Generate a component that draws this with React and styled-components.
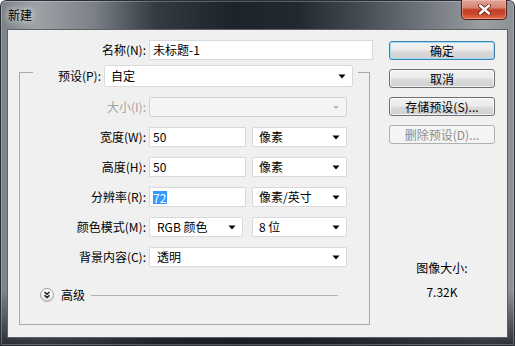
import styled, { createGlobalStyle } from 'styled-components'

const GlobalStyle = createGlobalStyle`
  html, body { margin: 0; padding: 0; }
  body {
    width: 515px;
    height: 346px;
    overflow: hidden;
    font-family: "Noto Sans CJK SC", "Noto Sans", sans-serif;
    font-size: 12px;
    color: #000;
  }
`

export default function App() {
  return (
    <>
      <GlobalStyle />
      <Window>
        <TitleBar>
          <Title>新建</Title>
          <CloseButton>
            <svg width="13" height="11" viewBox="0 0 13 11">
              <path d="M2 1.5 L11 9.5 M11 1.5 L2 9.5" stroke="#5a1a10" strokeWidth="4" strokeLinecap="round" />
              <path d="M2 1.5 L11 9.5 M11 1.5 L2 9.5" stroke="#fff" strokeWidth="2.4" strokeLinecap="round" />
            </svg>
          </CloseButton>
        </TitleBar>

        <Body>
          <LeftColumn>
            <Row>
              <Label $w={138}>名称(N):</Label>
              <TextBox $w={224}>未标题-1</TextBox>
            </Row>

            <GroupBox>
              <PresetRow>
                <PresetLabel>预设(P):</PresetLabel>
                <Select $w={249} $h={22} value="自定" />
              </PresetRow>

              <FieldRow>
                <Label $w={126} $disabled>大小(I):</Label>
                <Select $w={198} disabled />
              </FieldRow>
              <FieldRow>
                <Label $w={126}>宽度(W):</Label>
                <TextBox $w={97}>50</TextBox>
                <Select $w={95} $gap={6} value="像素" />
              </FieldRow>
              <FieldRow>
                <Label $w={126}>高度(H):</Label>
                <TextBox $w={97}>50</TextBox>
                <Select $w={95} $gap={6} value="像素" />
              </FieldRow>
              <FieldRow>
                <Label $w={126}>分辨率(R):</Label>
                <TextBox $w={97}><Selected>72</Selected></TextBox>
                <Select $w={95} $gap={6} value="像素/英寸" />
              </FieldRow>
              <FieldRow>
                <Label $w={126}>颜色模式(M):</Label>
                <Select $w={94} value="RGB 颜色" $pad={7} />
                <Select $w={95} $gap={9} value="8 位" />
              </FieldRow>
              <FieldRow>
                <Label $w={126}>背景内容(C):</Label>
                <Select $w={198} value="透明" $pad={7} />
              </FieldRow>

              <AdvancedRow>
                <ChevronButton>
                  <svg width="12" height="12" viewBox="0 0 12 12">
                    <path d="M3.5 3 L6 5.2 L8.5 3 M3.5 6.3 L6 8.5 L8.5 6.3" fill="none" stroke="#1a1a1a" strokeWidth="1.4" />
                  </svg>
                </ChevronButton>
                <AdvancedText>高级</AdvancedText>
                <Rule />
              </AdvancedRow>
            </GroupBox>
          </LeftColumn>

          <RightColumn>
            <Button $default>确定</Button>
            <Button>取消</Button>
            <Button>存储预设(S)...</Button>
            <Button disabled>删除预设(D)...</Button>
            <ImageSize>
              <SizeLine>图像大小:</SizeLine>
              <SizeLine>7.32K</SizeLine>
            </ImageSize>
          </RightColumn>
        </Body>
      </Window>
    </>
  )
}

function Select({ value, disabled, $w, $h, $gap, $pad }) {
  return (
    <SelectBox $w={$w} $h={$h} $gap={$gap} $pad={$pad} $disabled={disabled}>
      <span>{value}</span>
      <svg width="8" height="5" viewBox="0 0 8 5">
        {disabled
          ? <path d="M1 1 L4 4 L7 1 Z" fill="#b4b4b4" />
          : <path d="M0.5 0.5 L7.5 0.5 L4 4.5 Z" fill="#000" />}
      </svg>
    </SelectBox>
  )
}

const Window = styled.div`
  width: 515px;
  height: 346px;
  box-sizing: border-box;
  display: flex;
  flex-direction: column;
  border-radius: 6px 6px 0 0;
  overflow: hidden;
  box-shadow: inset 0 0 0 1px #2b3036, inset 0 0 0 2px rgba(255,255,255,0.25);
  background:
    linear-gradient(180deg, rgba(0,0,0,0) 0, rgba(0,0,0,0) 290px, rgba(25,30,36,0.85) 346px),
    linear-gradient(90deg, #7a8087 0%, #9da2a7 7%, #7c8288 18%, #343b43 30%, #1d232b 45%, #232931 58%, #444b53 70%, #767c82 84%, #9a9fa4 94%, #8b9096 100%);
`

const TitleBar = styled.div`
  height: 29px;
  flex-shrink: 0;
  display: flex;
  justify-content: space-between;
  align-items: flex-start;
`

const Title = styled.div`
  padding: 7px 0 0 8px;
  font-size: 12px;
  line-height: 16px;
  color: #000;
  text-shadow: 0 0 6px rgba(255,255,255,0.9), 0 0 10px rgba(255,255,255,0.6);
`

const CloseButton = styled.div`
  width: 46px;
  height: 20px;
  box-sizing: border-box;
  margin-right: 8px;
  border: 1px solid #4e1d14;
  border-top: none;
  border-radius: 0 0 5px 5px;
  display: flex;
  align-items: center;
  justify-content: center;
  box-shadow: inset 0 0 0 1px rgba(255,200,190,0.45);
  background: linear-gradient(180deg, #e0a596 0%, #d68471 40%, #c24026 52%, #c9472c 72%, #e46c4a 100%);
`

const Body = styled.div`
  flex: 1;
  margin: 0 7px 8px 7px;
  background: #f0f0f0;
  border: 1px solid #5b6269;
  display: flex;
`

const LeftColumn = styled.div`
  width: 374px;
  flex-shrink: 0;
  display: flex;
  flex-direction: column;
  padding-top: 10px;
`

const Row = styled.div`
  display: flex;
  align-items: center;
  height: 20px;
`

const FieldRow = styled(Row)`
  margin-top: 10px;
`

const Label = styled.div`
  width: ${p => p.$w}px;
  margin-right: 3px;
  text-align: right;
  line-height: 16px;
  white-space: nowrap;
  color: ${p => (p.$disabled ? '#a3a3a3' : '#000')};
`

const TextBox = styled.div`
  width: ${p => p.$w}px;
  height: 20px;
  box-sizing: border-box;
  border: 1px solid #d9d9d9;
  background: #fff;
  padding-left: 3px;
  display: flex;
  align-items: center;
  line-height: 16px;
  white-space: nowrap;
`

const Selected = styled.span`
  background: #3399ff;
  color: #fff;
  line-height: 13px;
  padding: 0 1px 0 0;
`

const SelectBox = styled.div`
  width: ${p => p.$w}px;
  height: ${p => p.$h || 20}px;
  margin-left: ${p => p.$gap || 0}px;
  box-sizing: border-box;
  border: 1px solid ${p => (p.$disabled ? '#d4d4d4' : '#d9d9d9')};
  border-radius: 2px;
  background: ${p => (p.$disabled ? '#f4f4f4' : '#fff')};
  padding: 0 6px 0 ${p => p.$pad || 6}px;
  display: flex;
  align-items: center;
  justify-content: space-between;
  line-height: 16px;
  white-space: nowrap;
`

const GroupBox = styled.div`
  margin: 12px 0 0 11px;
  width: 351px;
  box-sizing: border-box;
  border: 1px solid #a9a9a9;
  padding-bottom: 21px;
  display: flex;
  flex-direction: column;
`

const PresetRow = styled.div`
  margin: -8px 0 0 13px;
  width: 325px;
  height: 22px;
  display: flex;
  align-items: center;
  background: #f0f0f0;
`

const PresetLabel = styled.div`
  width: 71px;
  box-sizing: border-box;
  padding-right: 3px;
  text-align: right;
  line-height: 16px;
  white-space: nowrap;
`

const AdvancedRow = styled.div`
  margin-top: 20px;
  height: 16px;
  padding-left: 20px;
  margin-right: 31px;
  display: flex;
  align-items: center;
`

const ChevronButton = styled.div`
  width: 14px;
  height: 14px;
  box-sizing: border-box;
  border: 1px solid #a2a2a2;
  border-radius: 50%;
  background: linear-gradient(180deg, #ffffff 0%, #f2f2f2 50%, #d9d9d9 100%);
  display: flex;
  align-items: center;
  justify-content: center;
`

const AdvancedText = styled.div`
  margin-left: 7px;
  line-height: 16px;
`

const Rule = styled.div`
  flex: 1;
  height: 1px;
  margin-left: 6px;
  background: #b0b0b0;
`

const RightColumn = styled.div`
  flex: 1;
  display: flex;
  flex-direction: column;
  gap: 9px;
  padding: 11px 0 0 7px;
`

const Button = styled.div`
  width: 106px;
  height: 19px;
  box-sizing: border-box;
  border-radius: 3px;
  display: flex;
  align-items: center;
  justify-content: center;
  line-height: 16px;
  white-space: nowrap;
  border: 1px solid ${p => (p.disabled ? '#adb2b5' : p.$default ? '#3c7fb1' : '#707070')};
  color: ${p => (p.disabled ? '#8d8d8d' : '#000')};
  background: ${p => (p.disabled
    ? '#f4f4f4'
    : 'linear-gradient(180deg, #f2f2f2 0%, #ebebeb 48%, #dddddd 52%, #cfcfcf 100%)')};
  box-shadow: ${p => (p.disabled
    ? 'none'
    : p.$default
      ? 'inset 0 0 0 1px #9fdcf8'
      : 'inset 0 0 0 1px rgba(255,255,255,0.7)')};
`

const ImageSize = styled.div`
  margin-top: auto;
  width: 106px;
  padding-bottom: 37px;
  display: flex;
  flex-direction: column;
  align-items: center;
  gap: 8px;
`

const SizeLine = styled.div`
  line-height: 16px;
`
